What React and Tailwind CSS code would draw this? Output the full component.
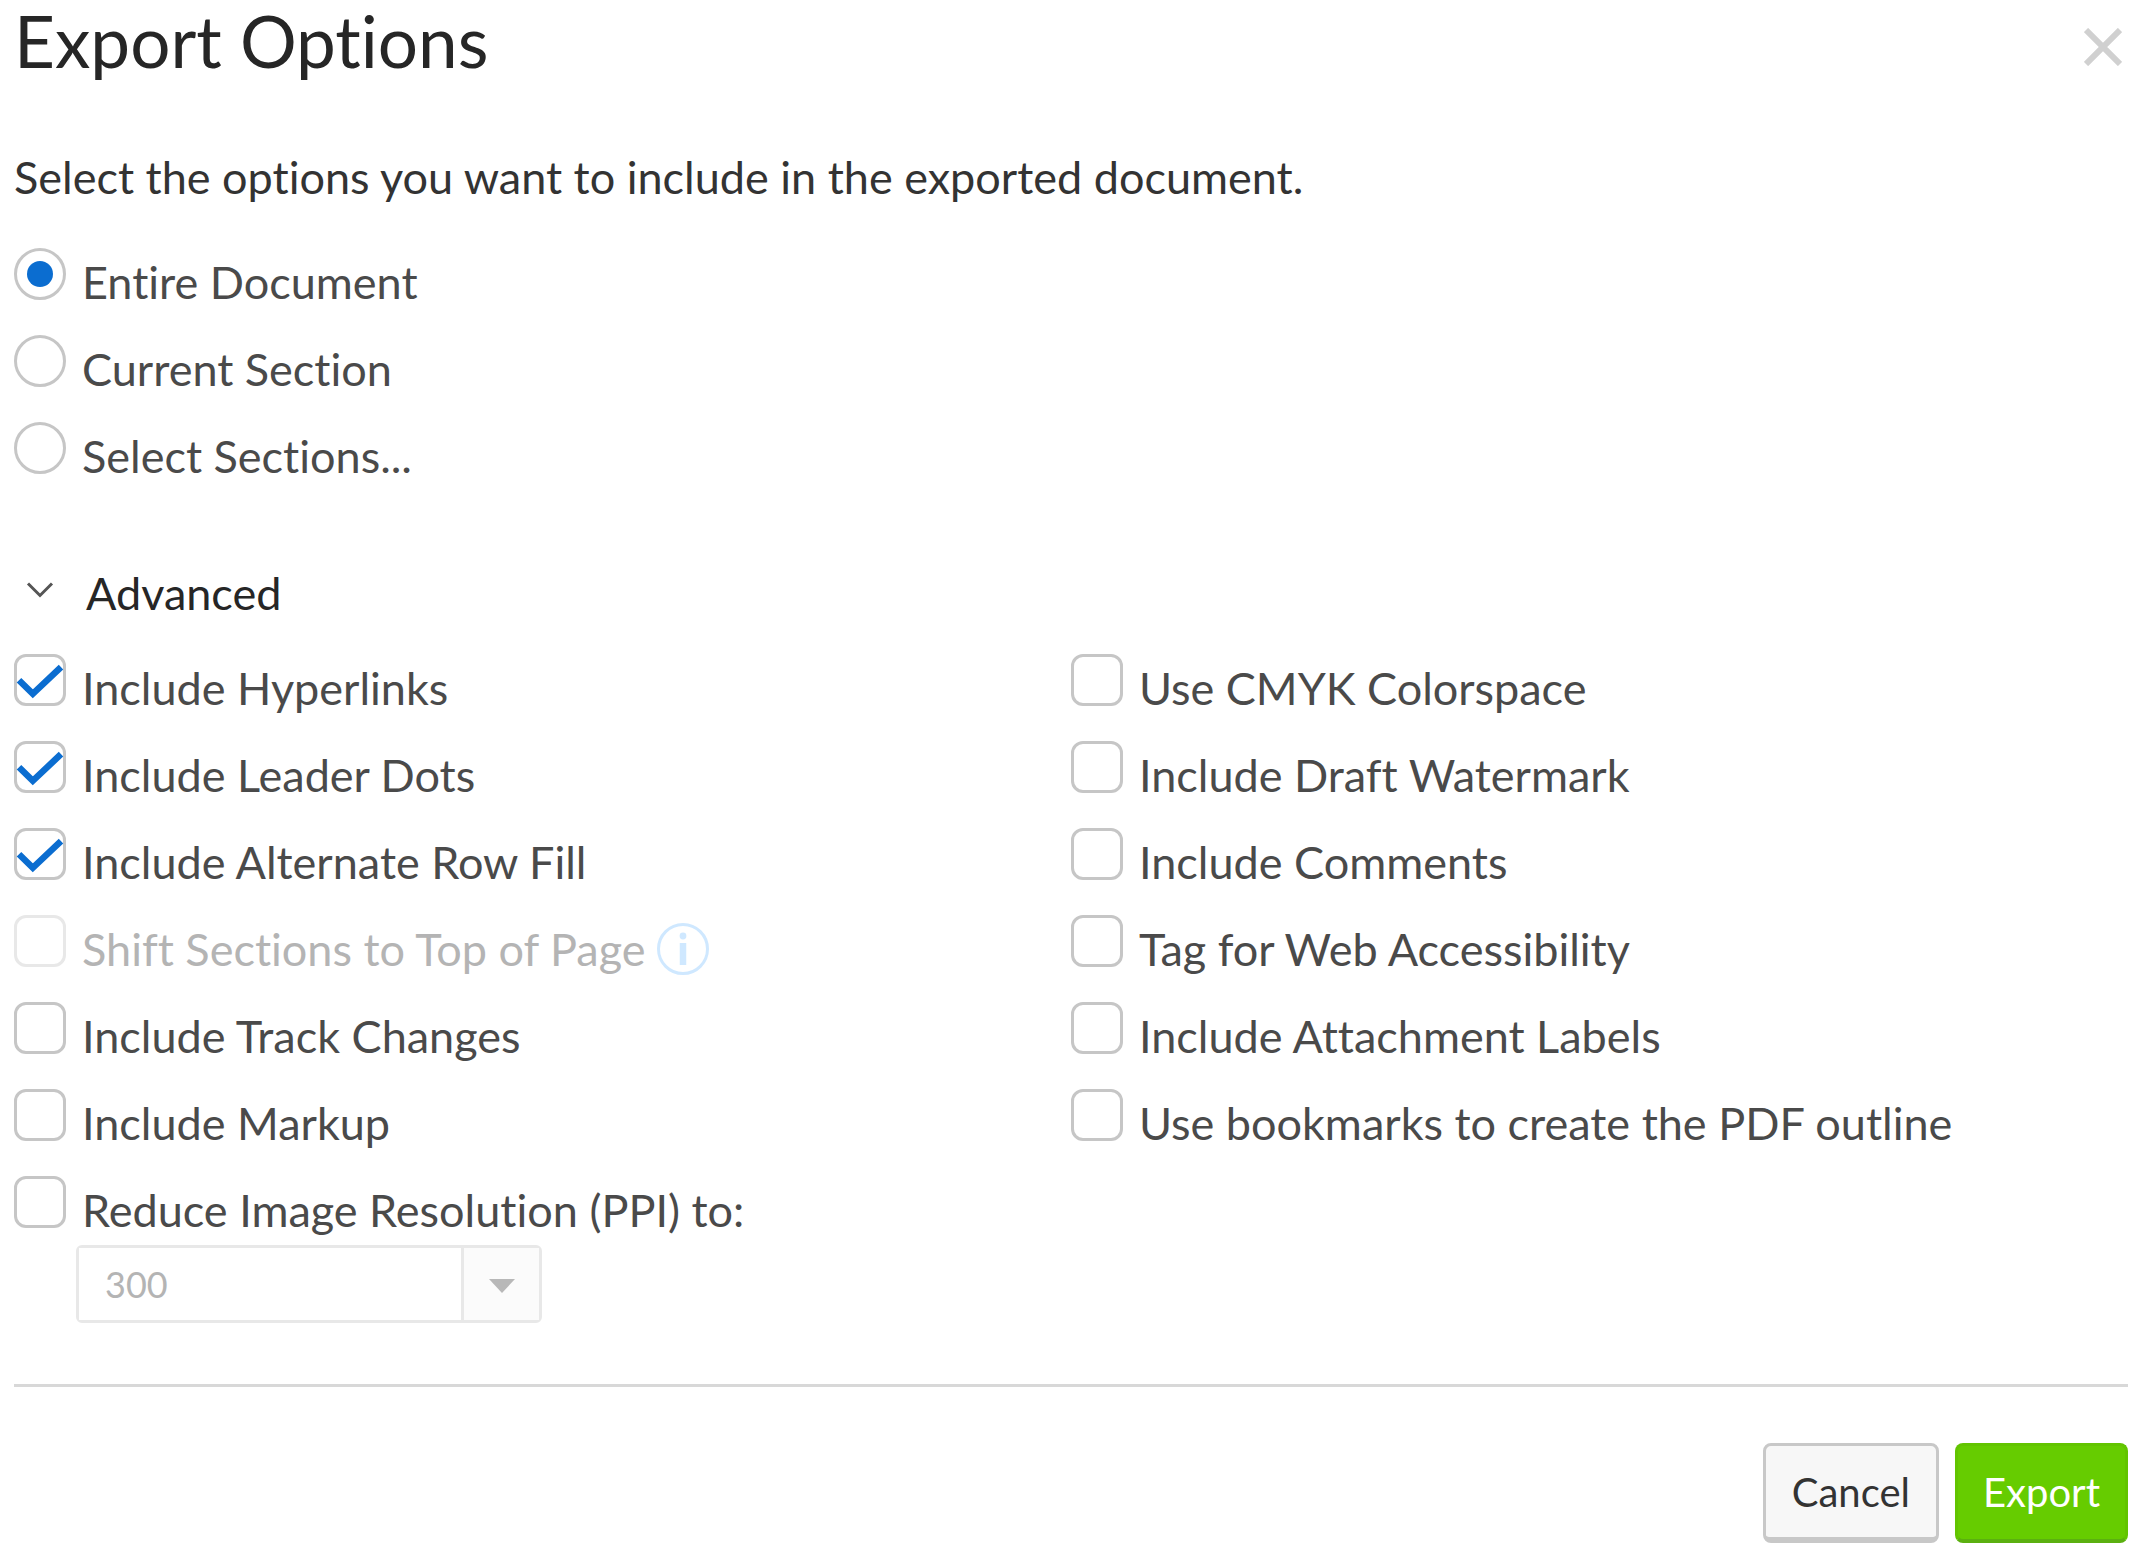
import { useState } from "react";

const exportScopes = ["Entire Document", "Current Section", "Select Sections..."];

const leftOptions = [
  { label: "Include Hyperlinks", checked: true },
  { label: "Include Leader Dots", checked: true },
  { label: "Include Alternate Row Fill", checked: true },
  { label: "Shift Sections to Top of Page", disabled: true, info: true },
  { label: "Include Track Changes" },
  { label: "Include Markup" },
  { label: "Reduce Image Resolution (PPI) to:" },
];

const rightOptions = [
  { label: "Use CMYK Colorspace" },
  { label: "Include Draft Watermark" },
  { label: "Include Comments" },
  { label: "Tag for Web Accessibility" },
  { label: "Include Attachment Labels" },
  { label: "Use bookmarks to create the PDF outline" },
];

const InfoIcon = () => (
  <svg viewBox="0 0 52 52" className="mt-2 ml-3 size-[52px] shrink-0" fill="none">
    <circle cx="26" cy="26" r="24.5" stroke="#cfe8ff" strokeWidth="3" />
    <circle cx="26" cy="13" r="3.4" fill="#cfe8ff" />
    <path d="M26 20v22" stroke="#cfe8ff" strokeWidth="6.5" />
  </svg>
);

const RadioOption = ({ label, checked, onChange }) => (
  <label className="flex items-start gap-4 leading-[68px] text-[#4a4a4a]">
    <span className="grid size-[52px] shrink-0 place-items-center">
      <input
        type="radio"
        name="scope"
        checked={checked}
        onChange={onChange}
        className="peer col-start-1 row-start-1 size-[52px] appearance-none rounded-full border-3 border-[#c6c6c6] bg-white"
      />
      <span className="pointer-events-none col-start-1 row-start-1 hidden size-[26px] rounded-full bg-[#0b6dd0] peer-checked:block" />
    </span>
    {label}
  </label>
);

const CheckboxOption = ({ label, checked = false, disabled = false, info = false }) => (
  <div className="flex items-start">
    <label
      className={`flex items-start gap-4 leading-[68px] ${disabled ? "text-[#b4b4b4]" : "text-[#4a4a4a]"}`}
    >
      <span className="grid size-[52px] shrink-0">
        <input
          type="checkbox"
          defaultChecked={checked}
          disabled={disabled}
          className="peer col-start-1 row-start-1 size-[52px] appearance-none rounded-xl border-3 border-[#c6c6c6] bg-white disabled:border-[#e8e8e8]"
        />
        <svg
          viewBox="0 0 52 52"
          fill="none"
          className="pointer-events-none col-start-1 row-start-1 hidden size-[52px] peer-checked:block"
        >
          <path d="M5 26.2 18.8 39.8 47 13.2" stroke="#0b6dd0" strokeWidth="6.5" />
        </svg>
      </span>
      {label}
    </label>
    {info && <InfoIcon />}
  </div>
);

const App = () => {
  const [scope, setScope] = useState(exportScopes[0]);
  const [showAdvanced, setShowAdvanced] = useState(true);

  return (
    <div className="min-h-screen bg-white pr-[26px] pb-5 pl-3.5 font-['Lato',sans-serif] text-[45px] text-[#333333] [font-variant-ligatures:none]">
      <header className="flex items-start justify-between">
        <h1 className="text-[71px] leading-[82px] text-[#262626]">Export Options</h1>
        <button type="button" aria-label="Close" className="mt-7 mr-1.5">
          <svg viewBox="0 0 38 38" className="size-[38px]" fill="none">
            <path d="M2 2 36 36M36 2 2 36" stroke="#d0d0d0" strokeWidth="6" />
          </svg>
        </button>
      </header>

      <p className="mt-[61px] leading-[68px]">
        Select the options you want to include in the exported document.
      </p>

      <div className="mt-[37px] flex flex-col items-start gap-[19px]">
        {exportScopes.map((label) => (
          <RadioOption
            key={label}
            label={label}
            checked={scope === label}
            onChange={() => setScope(label)}
          />
        ))}
      </div>

      <button
        type="button"
        aria-expanded={showAdvanced}
        onClick={() => setShowAdvanced(!showAdvanced)}
        className="mt-[69px] flex items-center gap-5 leading-[68px] text-[#262626]"
      >
        <svg viewBox="0 0 52 52" className="size-[52px]" fill="none">
          <path d="M14 16.5 26 28.5 38 16.5" stroke="#555555" strokeWidth="3" />
        </svg>
        Advanced
      </button>

      {showAdvanced && (
        <div className="mt-[27px] grid grid-cols-2">
          <div>
            <div className="flex flex-col gap-[19px]">
              {leftOptions.map((option) => (
                <CheckboxOption key={option.label} {...option} />
              ))}
            </div>
            <div className="mt-px ml-[62px] flex h-[78px] w-[466px] rounded-md border-3 border-[#e8e8e8]">
              <select
                aria-label="Image resolution"
                disabled
                className="min-w-0 flex-1 appearance-none bg-white pl-[26px] text-[36px] text-[#b4b4b4] opacity-100"
              >
                <option>300</option>
              </select>
              <span className="flex w-[78px] items-center justify-center border-l-3 border-[#e8e8e8] bg-[#fbfbfb]">
                <svg viewBox="0 0 26 14" className="mt-1 h-3.5 w-[26px]">
                  <path d="M0 0h26L13 14z" fill="#b8b8b8" />
                </svg>
              </span>
            </div>
          </div>
          <div className="flex flex-col gap-[19px]">
            {rightOptions.map((option) => (
              <CheckboxOption key={option.label} {...option} />
            ))}
          </div>
        </div>
      )}

      <footer className="mt-[61px] flex justify-end gap-4 border-t-3 border-[#d8d8d8] pt-14 text-[40px] leading-[48px]">
        <button
          type="button"
          className="rounded-lg border-3 border-b-6 border-[#c8c8c8] bg-[#f7f7f7] px-[26px] pt-[22px] pb-[21px] text-[#333333]"
        >
          Cancel
        </button>
        <button
          type="button"
          className="rounded-lg border-3 border-b-4 border-[#62c400] border-b-[#5bb010] bg-[#66cc00] px-[25px] pt-[22px] pb-[23px] text-white"
        >
          Export
        </button>
      </footer>
    </div>
  );
};

export default App;
